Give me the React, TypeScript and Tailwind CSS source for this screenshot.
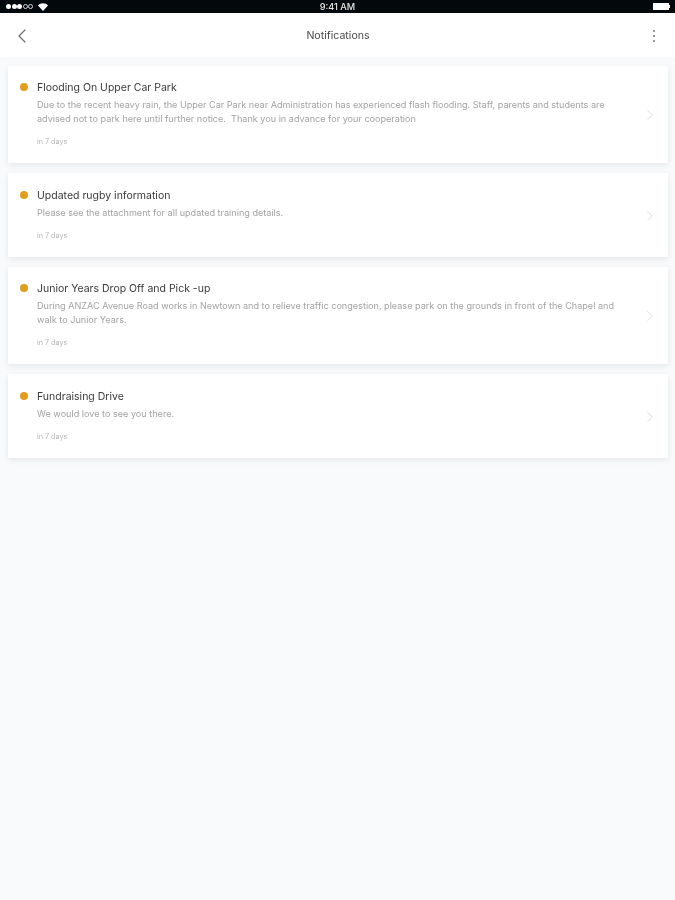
import { ChevronLeft, ChevronRight } from "lucide-react";

const notifications = [
  {
    title: "Flooding On Upper Car Park",
    body: [
      "Due to the recent heavy rain, the Upper Car Park near Administration has experienced flash flooding. Staff, parents and students are",
      "advised not to park here until further notice.  Thank you in advance for your cooperation",
    ],
  },
  {
    title: "Updated rugby information",
    body: ["Please see the attachment for all updated training details."],
  },
  {
    title: "Junior Years Drop Off and Pick -up",
    body: [
      "During ANZAC Avenue Road works in Newtown and to relieve traffic congestion, please park on the grounds in front of the Chapel and",
      "walk to Junior Years.",
    ],
  },
  {
    title: "Fundraising Drive",
    body: ["We would love to see you there."],
  },
];

const StatusBar = () => (
  <div className="relative flex h-[13px] items-center justify-between bg-[#03080c] pl-[6px] pr-[5px] text-white">
    <div className="flex items-center gap-[5px]">
      <div className="flex items-center gap-[0.5px]">
        <span className="h-[5px] w-[5px] rounded-full bg-white" />
        <span className="h-[5px] w-[5px] rounded-full bg-white" />
        <span className="h-[5px] w-[5px] rounded-full bg-white" />
        <span className="h-[5px] w-[5px] rounded-full border-[0.5px] border-gray-300" />
        <span className="h-[5px] w-[5px] rounded-full border-[0.5px] border-gray-300" />
      </div>
      <svg width="10" height="8" viewBox="0 0 10 8" fill="white">
        <path d="M5 8 0 2.4C1.3 1 3 .2 5 .2s3.700.8 5 2.200z" />
      </svg>
    </div>
    <div className="absolute inset-x-0 top-0 flex h-[13px] items-center justify-center pt-[1px] text-[9.2px] font-medium text-[#e5e5e5]">
      9:41 AM
    </div>
    <div className="flex items-center">
      <div className="h-[7px] w-[16px] bg-white" />
      <div className="h-[3px] w-[1px] bg-white" />
    </div>
  </div>
);

const Card = ({ title, body }: { title: string; body: string[] }) => (
  <div
    className={
      body.length > 1
        ? "flex items-center bg-white pb-[14px] pl-[12px] pr-[9px] pt-[15.5px] shadow-[0_2px_6px_rgba(60,70,80,0.10)]"
        : "flex items-center bg-white pb-[14px] pl-[12px] pr-[9px] pt-[16.5px] shadow-[0_2px_6px_rgba(60,70,80,0.10)]"
    }
  >
    <div className="flex-1">
      <div className="flex items-center gap-[9px]">
        <span className="mb-[3px] h-[8px] w-[8px] shrink-0 rounded-full bg-[#e29d1c]" />
        <h2 className="text-[10.5px] leading-[14px] text-[#3a3a3a]">{title}</h2>
      </div>
      <div className="pl-[17px] pt-[3px] text-[9.1px] leading-[14px] text-[#a3a3a3]">
        {body.map((line) => (
          <p key={line} className="whitespace-pre">{line}</p>
        ))}
        <p className="pt-[8.5px] text-[7.2px] text-[#b5b5b5]">in 7 days</p>
      </div>
    </div>
    <ChevronRight className="h-[18px] w-[18px] text-[#dcdcdc]" strokeWidth={1.3} />
  </div>
);

export default function App() {
  return (
    <div className="h-[900px] bg-[#f8fafb] font-['Inter',sans-serif] blur-[0.7px]">
      <StatusBar />
      {/* Header */}
      <header className="flex h-[44px] items-center justify-between bg-white pl-[10px] pr-[9px] pt-[2px]">
        <div className="flex w-[40px] justify-start">
          <ChevronLeft className="h-[24px] w-[24px] text-[#6b6b6b]" strokeWidth={1.2} />
        </div>
        <h1 className="text-[10.6px] text-[#4a4a4a]">Notifications</h1>
        <div className="flex w-[40px] justify-end pr-[10.500px]">
          <div className="flex flex-col gap-[2.5px]">
            <span className="h-[2.5px] w-[2.5px] rounded-full bg-[#707070]" />
            <span className="h-[2.5px] w-[2.5px] rounded-full bg-[#707070]" />
            <span className="h-[2.5px] w-[2.5px] rounded-full bg-[#707070]" />
          </div>
        </div>
      </header>

      <main className="flex flex-col gap-[10px] pl-[8px] pr-[7px] pt-[8.5px]">
        {notifications.map((n) => (
          <Card key={n.title} title={n.title} body={n.body} />
        ))}
      </main>
    </div>
  );
}
